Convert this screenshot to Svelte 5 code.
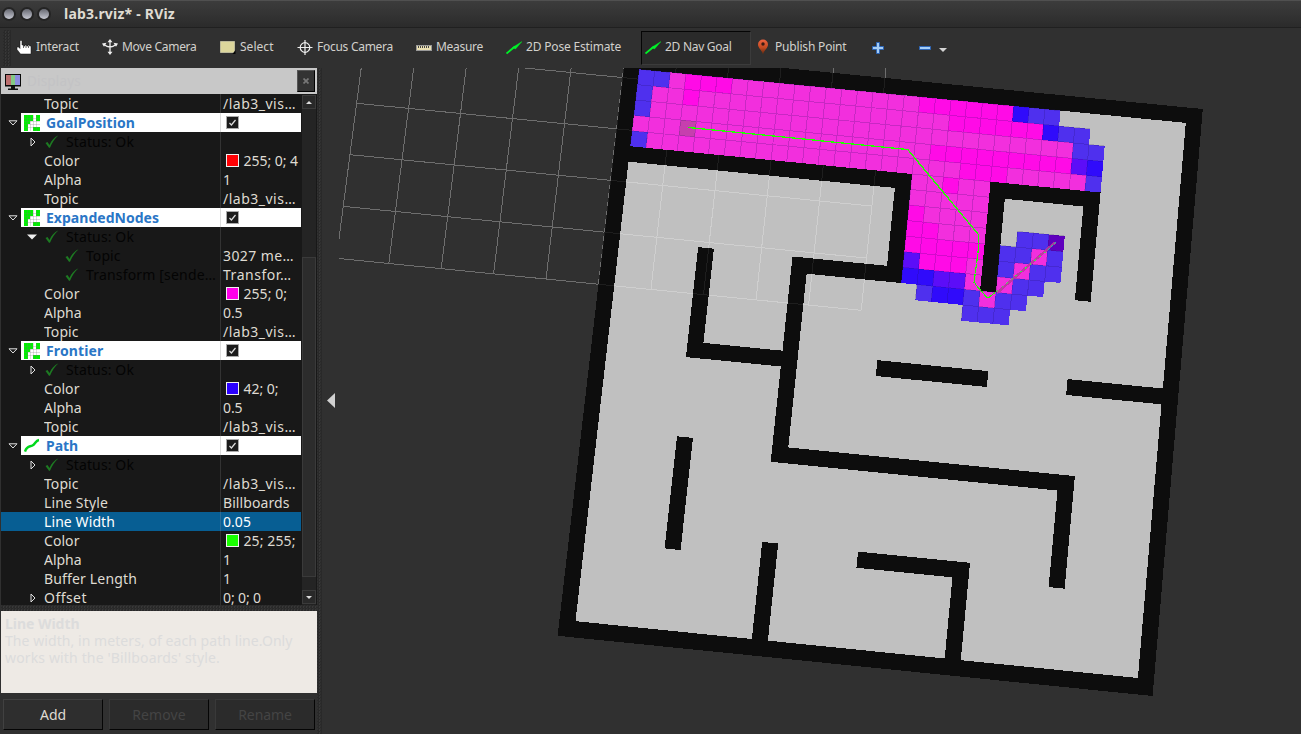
<script>
  function fit(node, target) {
    if (!target) return;
    const width = node.getBoundingClientRect().width;
    node.style.letterSpacing = `${(target - width) / node.textContent.length}px`;
  }

  const tools = [
    { icon: 'hand', label: 'Interact', w: 43, slot: 86 },
    { icon: 'move', label: 'Move Camera', w: 74.5, slot: 118 },
    { icon: 'select', label: 'Select', w: 33.5, slot: 77 },
    { icon: 'focus', label: 'Focus Camera', w: 76, slot: 119 },
    { icon: 'measure', label: 'Measure', w: 47, slot: 90 },
    { icon: 'arrow', label: '2D Pose Estimate', w: 95, slot: 135 },
    { icon: 'arrow', label: '2D Nav Goal', w: 66.5, slot: 110, active: true },
    { icon: 'pin', label: 'Publish Point', w: 71.5, slot: 115 }
  ];

  const topic = { k: 'Topic', kw: 34.5, v: '/lab3_vis…', vw: 73 };
  const status = { k: 'Status: Ok', kw: 68, kind: 'status', tri: 'right' };
  const alpha = (v) => ({ k: 'Alpha', kw: 37.5, v, vw: v === '1' ? 0 : 19.5 });
  const rows = [
    topic,
    { k: 'GoalPosition', kw: 89, kind: 'display', icon: 'map' },
    status,
    { k: 'Color', kw: 35.5, v: '255; 0; 4', vw: 54.5, swatch: '#ff0004' },
    alpha('1'),
    topic,
    { k: 'ExpandedNodes', kw: 113, kind: 'display', icon: 'map' },
    { ...status, tri: 'down' },
    { k: 'Topic', kw: 34.5, v: '3027 me…', vw: 71, kind: 'status', deep: true },
    { k: 'Transform [sende…', kw: 130, v: 'Transfor…', vw: 68.5, kind: 'status', deep: true },
    { k: 'Color', kw: 35.5, v: '255; 0;', vw: 43.5, swatch: '#ff00ea' },
    alpha('0.5'),
    topic,
    { k: 'Frontier', kw: 57.5, kind: 'display', icon: 'map' },
    status,
    { k: 'Color', kw: 35.5, v: '42; 0;', vw: 35, swatch: '#2a00ff' },
    alpha('0.5'),
    topic,
    { k: 'Path', kw: 32, kind: 'display', icon: 'path' },
    status,
    topic,
    { k: 'Line Style', kw: 64, v: 'Billboards', vw: 66.5 },
    { k: 'Line Width', kw: 71, v: '0.05', vw: 28, selected: true },
    { k: 'Color', kw: 35.5, v: '25; 255;', vw: 52, swatch: '#19ff00' },
    alpha('1'),
    { k: 'Buffer Length', kw: 93, v: '1' },
    { k: 'Offset', kw: 43, v: '0; 0; 0', vw: 38, tri: 'right' }
  ];

  // Perspective projection of the occupancy grid: 37 x 37 cells, walls start at -1.
  const corners = [[625.4, 52.5], [1202.8, 109], [1152.6, 696], [557.6, 635.8]];
  const [[x0, y0], [x1, y1], [x2, y2], [x3, y3]] = corners;
  const dx1 = x1 - x2, dx2 = x3 - x2, sx = x0 - x1 + x2 - x3;
  const dy1 = y1 - y2, dy2 = y3 - y2, sy = y0 - y1 + y2 - y3;
  const det = dx1 * dy2 - dx2 * dy1;
  const g = (sx * dy2 - dx2 * sy) / det;
  const h = (dx1 * sy - sx * dy1) / det;
  function project(c, r) {
    const u = (c + 1) / 37, v = (r + 1) / 37;
    const w = g * u + h * v + 1;
    return [
      ((x1 - x0 + g * x1) * u + (x3 - x0 + h * x3) * v + x0) / w,
      ((y1 - y0 + g * y1) * u + (y3 - y0 + h * y3) * v + y0) / w
    ];
  }
  const pt = (c, r) => project(c, r).map((n) => n.toFixed(2)).join(',');
  const quad = (c, r, w, n) => `M${pt(c, r)}L${pt(c + w, r)}L${pt(c + w, r + n)}L${pt(c, r + n)}Z`;

  const walls = [
    [-1, 5, 19, 1], [17, 5, 1, 7], [11, 11, 7, 1], [11, 11, 1, 13], [11, 23, 19, 1], [29, 23, 1, 7],
    [5, 11, 1, 7], [5, 17, 7, 1], [17, 17, 7, 1], [29, 17, 7, 1],
    [23, 5, 7, 1], [29, 5, 1, 7], [23, 5, 1, 7],
    [5, 23, 1, 7], [11, 29, 1, 7], [17, 29, 7, 1], [23, 29, 1, 7]
  ].map((a) => quad(...a)).join('');

  const lines = [];
  const step = 10 / 3, gridBottom = 13.97;
  for (let i = 0; i <= 10; i++) {
    const c = -1 + step * (i - 5), r = gridBottom - step * i;
    lines.push(`M${pt(c, gridBottom)}L${pt(c, gridBottom - step * 10)}`);
    lines.push(`M${pt(-1 - step * 5, r)}L${pt(-1 + step * 5, r)}`);
  }
  const grid = lines.join('');

  // row, first column, then one letter per cell
  const palette = { b: '#4f30ee', d: '#300bfb', v: '#5c0df8', m: '#ff0be6', p: '#f22fdd', g: '#c63fae', x: '#5f00bd' };
  const runs = [
    [0, 0, 'bbpmmm' + 'p'.repeat(12) + 'mmmmmmdbb'],
    [1, 0, 'bppm' + 'p'.repeat(16) + 'mmmmmmdbb'],
    [2, 0, 'b' + 'p'.repeat(27) + 'bb'],
    [3, 0, 'pppg' + 'p'.repeat(15) + 'mmmmmmmmmvd'],
    [4, 0, 'b' + 'p'.repeat(20) + 'mmmpppppb'],
    [5, 18, 'ppmpp'], [6, 18, 'ppppp'], [7, 18, 'mpppp'], [8, 18, 'mmppp'], [9, 18, 'mmmmm'],
    [10, 18, 'vmmmp'], [11, 18, 'ddvvp'], [12, 19, 'bddbpbb'], [13, 22, 'bbb'],
    [8, 25, 'bbx'], [9, 24, 'bbpb'], [10, 24, 'bpbb'], [11, 24, 'pbb']
  ];
  const cells = runs.flatMap(([r, c, s]) =>
    [...s].map((ch, i) => ({ d: quad(c + i, r, 1, 1), fill: palette[ch] }))
  );
  const cellLines = runs.map(([r, c, s]) =>
    [...s].map((_, i) => `M${pt(c + i, r + 1)}L${pt(c + i, r)}L${pt(c + i + 1, r)}`).join('')
  ).join('');
</script>

{#snippet toolIcon(name)}
  <svg class="ticon" viewBox="0 0 16 16" width="16" height="16">
    {#if name === 'hand'}
      <path d="M4 1.500h2V6h1.500v1H9V6h1.500v1H12V6h1.500v1H15v8H4.500L1 10.500V8h1.500L4 9.500Z" fill="#fff" stroke="#111" stroke-width=".5" />
      <path d="M7.500 7v2M10 7v2M12.500 7v2" stroke="#444" stroke-width=".8" />
    {:else if name === 'move'}
      <path d="M8 2v12M2 5.500Q8 10.500 14 5.500" fill="none" stroke="#eee" stroke-width="1.300" />
      <path d="M8 0l2.500 3.200h-5zM8 16l2.500-3.200h-5zM0 4.500l4.500-.7-2.500 4zM16 4.500l-4.500-.7 2.500 4z" fill="#eee" />
    {:else if name === 'select'}
      <rect x=".5" y="2.500" width="14" height="11" fill="#dcd69c" stroke="#f3efcf" stroke-dasharray="1 1" />
      <path d="M15.500 11v4h-3z" fill="#050505" />
    {:else if name === 'focus'}
      <circle cx="8" cy="8.500" r="4.800" fill="none" stroke="#eee" stroke-width="1.200" />
      <path d="M8 1v15M.5 8.500h15" stroke="#eee" stroke-width="1.200" />
    {:else if name === 'measure'}
      <rect x=".5" y="6.500" width="15" height="5" fill="#e9deb0" stroke="#999" />
      <path d="M2.500 7v2M4.500 7v2M6.500 7v2M8.500 7v2M10.500 7v2M12.500 7v2" stroke="#444" stroke-width="1" />
    {:else if name === 'arrow'}
      <path d="M.5 14.500L9 7.500" stroke="#00f228" stroke-width="1.800" />
      <path d="M6.500 8.500L16 2.500l-6.500 7.500z" fill="#00f228" stroke="#00f228" stroke-width=".4" />
    {:else if name === 'pin'}
      <defs><linearGradient id="pin" x2="0" y2="1"><stop offset="0" stop-color="#ef6340" /><stop offset=".55" stop-color="#c24a20" /><stop offset="1" stop-color="#572711" /></linearGradient></defs>
      <path d="M8 .5a5 5 0 0 1 5 5c0 3.500-3.500 5-5 10-1.500-5-5-6.500-5-10a5 5 0 0 1 5-5z" fill="url(#pin)" />
      <circle cx="8" cy="5" r="1.700" fill="#3a1a12" />
    {:else if name === 'plus'}
      <path d="M6.500 3.500h3v4h4v3h-4v4h-3v-4h-4v-3h4z" fill="#a5cdf5" stroke="#2d65b5" />
    {:else if name === 'minus'}
      <path d="M2.500 7.500h11v3h-11z" fill="#a5cdf5" stroke="#2d65b5" />
    {/if}
  </svg>
{/snippet}

<div class="window">
  <header class="titlebar">
    <i class="dot"></i><i class="dot"></i><i class="dot"></i>
    <span class="title" use:fit={111}>lab3.rviz* - RViz</span>
  </header>

  <nav class="toolbar">
    <i class="grip"></i>
    {#each tools as tool}
      <div class="tool" class:active={tool.active} style:width="{tool.slot}px">
        {@render toolIcon(tool.icon)}<span use:fit={tool.w}>{tool.label}</span>
      </div>
    {/each}
    <div class="tool plus">{@render toolIcon('plus')}</div>
    <div class="tool">{@render toolIcon('minus')}<i class="caret"></i></div>
  </nav>

  <main class="body">
    <aside class="panel">
      <div class="dock">
        <svg width="16" height="17" viewBox="0 0 16 17">
          <rect width="16" height="12.500" fill="#080808" />
          <path d="M1 1h5v10H1z" fill="#bb6e6e" /><path d="M6 1h4v10H6z" fill="#84c984" /><path d="M10 1h5v10h-5z" fill="#8c8ce0" />
          <path d="M6 12h4v2.500h3V16H3v-1.500h3z" fill="#111" />
        </svg>
        <span use:fit={54}>Displays</span>
        <button aria-label="Close"><svg width="6" height="6" viewBox="0 0 6 6"><path d="M.5.5l5 5M5.500.5l-5 5" stroke="#777" stroke-width="1.700" /></svg></button>
      </div>

      <div class="treewrap">
        <div class="tree">
          {#each rows as row}
            <div class="row {row.kind ?? ''}" class:deep={row.deep} class:selected={row.selected}>
              <div class="arrow">
                {#if row.kind === 'display'}
                  <svg width="10" height="6" viewBox="0 0 10 6"><path d="M1 .8h8L5 5z" fill="none" stroke="#e0e0e0" /></svg>
                {:else if row.tri === 'down'}
                  <svg class="open" width="10" height="6" viewBox="0 0 10 6"><path d="M0 .5h10L5 5.500z" fill="#eee" /></svg>
                {:else if row.tri === 'right'}
                  <svg width="6" height="10" viewBox="0 0 6 10"><path d="M1 1v8l4-4z" fill="none" stroke="#e0e0e0" /></svg>
                {/if}
              </div>
              <div class="key">
                {#if row.icon === 'map'}
                  <svg width="16" height="16" viewBox="0 0 16 16">
                    <path d="M0 0h16v16H0z" fill="#fff" />
                    <path d="M0 0h9v6H6v3H4v7H0zM12 0h4v6h-4zM9 12h7v4H9z" fill="#00f000" />
                    <path d="M3.500 0v16M6.500 0v16M9.500 0v16M12.500 0v16M0 3.500h16M0 6.500h16M0 9.500h16M0 12.500h16" stroke="#777" stroke-opacity=".25" />
                  </svg>
                {:else if row.icon === 'path'}
                  <svg width="16" height="16" viewBox="0 0 16 16"><path d="M1 13.500C3 7.500 5.500 9 8.500 7.500s3-5 6.500-5.500" fill="none" stroke="#00d81c" stroke-width="2.400" /></svg>
                {:else if row.kind === 'status'}
                  <svg width="14" height="13" viewBox="0 0 14 13"><path d="M.5 8l2-1 2 3C6.500 5.500 9 2.500 13.500.3 9.500 4 7 8 5 12.700H4z" fill="#1d7a22" /></svg>
                {/if}
                <span use:fit={row.kw}>{row.k}</span>
              </div>
              <div class="value">
                {#if row.kind === 'display'}
                  <i class="check"><svg width="11" height="11" viewBox="0 0 11 11"><path d="M2.500 6l1.900 2L8.500 3" fill="none" stroke="#ddd" stroke-width="1.200" /></svg></i>
                {/if}
                {#if row.swatch}<i class="swatch" style:background={row.swatch}></i>{/if}
                {#if row.v}<span use:fit={row.vw}>{row.v}</span>{/if}
              </div>
            </div>
          {/each}
        </div>
        <div class="scroll">
          <div class="sbtn"><svg width="6" height="3"><path d="M0 3l3-3 3 3z" fill="#ddd" /></svg></div>
          <div class="trough"></div>
          <div class="thumb"></div>
          <div class="gap"></div>
          <div class="sbtn"><svg width="6" height="3"><path d="M0 0l3 3 3-3z" fill="#ddd" /></svg></div>
        </div>
      </div>

      <div class="splitter"></div>
      <div class="help">
        <b use:fit={74.5}>Line Width</b>
        <span use:fit={287.5}>The width, in meters, of each path line.Only</span>
        <span use:fit={215}>works with the 'Billboards' style.</span>
      </div>
      <div class="buttons">
        <button><span use:fit={26}>Add</span></button>
        <button class="off"><span use:fit={53.5}>Remove</span></button>
        <button class="off"><span use:fit={53.5}>Rename</span></button>
      </div>
    </aside>

    <div class="vsplit"></div>
    <div class="collapse"><svg width="8" height="15" viewBox="0 0 8 15"><path d="M8 0v15L0 7.500z" fill="#d0d0d0" /></svg></div>

    <svg class="view" width="962" height="666" viewBox="339 68 962 666" shape-rendering="crispEdges">
      <defs><clipPath id="floor"><path d={quad(0, 6, 17, 29)} /></clipPath></defs>
      <path d={grid} fill="none" stroke="#646464" />
      <path d={quad(-1, -1, 37, 37)} fill="#0d0d0d" />
      <path d={quad(0, 0, 35, 35)} fill="#c0c0c0" />
      <path d={grid} fill="none" stroke="#fff" stroke-opacity=".2" clip-path="url(#floor)" />
      <path d={walls} fill="#0d0d0d" />
      <path d={grid} fill="none" stroke="#fff" stroke-opacity=".07" />
      {#each cells as cell}<path d={cell.d} fill={cell.fill} />{/each}
      <path d={cellLines} fill="none" stroke="#201060" stroke-opacity=".2" />
      <path d="M1055 242.500L997 293" stroke="#b83b9c" stroke-width="2.500" opacity=".85" />
      <path d="M688.300 127.500L907.700 149.500L978.300 234.300" fill="none" stroke="#22ff00" stroke-width="1.300" />
      <path d="M978.300 234.300V250L974 282.700L987.700 298.300L997 291" fill="none" stroke="#22ff00" stroke-width="1.200" stroke-dasharray="9 1" />
      <path d="M997 291L1048 250" stroke="#46dc55" stroke-dasharray="2 4" />
      <path d="M1048 250L1056 242" stroke="#1fd0a0" stroke-dasharray="3 1" />
    </svg>
  </main>
</div>

<style>
  :global(body) { background: #303030; overflow: hidden; }
  .window { width: 1301px; height: 734px; display: flex; flex-direction: column; background: #303030; font: 14px/19px "Noto Sans", sans-serif; color: #dfdbd2; white-space: pre; }
  svg { display: block; flex: none; }
  .titlebar { height: 28px; box-sizing: border-box; display: flex; align-items: center; padding: 0 0 1px 4px; gap: 7.500px; border-top: 1px solid #505050; border-bottom: 1px solid #202020; background: linear-gradient(#3c3c3c, #2b2b2b); }
  .dot { width: 10px; height: 10px; border-radius: 50%; background: linear-gradient(#666871, #c6c8d2); box-shadow: 0 0 0 2px #242424; }
  .title { font-weight: 700; margin-left: 7.500px; }
  .toolbar { height: 40px; display: flex; align-items: center; font-size: 12px; color: #d2d0cc; }
  .grip { width: 8px; height: 36px; margin: 0 5px 0 3px; background: conic-gradient(#292929 25%, #383838 0 50%, #292929 0 75%, #303030 0) 0 0 / 3px 3px; }
  .tool { box-sizing: border-box; display: flex; align-items: center; gap: 4px; height: 34px; padding-bottom: 2px; flex: none; }
  .tool span { line-height: 18px; }
  .active { padding: 0 0 2px 3px; margin-right: 4px; background: #2a2a2a; border: 1px solid; border-color: #050505 #3b3b3b #3b3b3b #050505; }
  .plus { width: 47px; }
  .caret { margin: 6px 0 0 2px; border: 4px solid transparent; border-top-color: #d4d4d4; border-bottom: 0; }
  .body { display: flex; height: 666px; }
  .panel { width: 316px; padding-left: 1px; display: flex; flex-direction: column; }
  .panel > div { flex: none; }
  .dock { height: 26px; box-sizing: border-box; display: flex; align-items: center; padding: 0 2px 0 4px; gap: 6px; background: #c8c8c8; font-size: 13.500px; }
  .dock > svg { margin-top: 2px; }
  .dock span { color: #c3c3c5; }
  .dock button { margin-left: auto; width: 18px; height: 22px; padding: 0; display: grid; place-items: center; background: #333; border: 1px solid; border-color: #555 #000 #000 #555; }
  .treewrap { height: 511px; display: flex; background: #181818; overflow: hidden; }
  .tree { width: 300px; }
  .row { height: 19px; display: grid; grid-template-columns: 43px 176px 81px; }
  .arrow { display: flex; align-items: center; padding-left: 29px; }
  .open { margin-left: -3px; }
  .key { display: flex; align-items: center; overflow: hidden; }
  .value { display: flex; align-items: center; border-left: 1px solid #333; padding-left: 2px; box-sizing: border-box; overflow: hidden; }
  .display { grid-template-columns: 20px 199px 81px; }
  .display .arrow { padding-left: 7px; }
  .display .key, .display .value { background: #fff; }
  .display .value { border-color: #ddd; padding-left: 5px; }
  .display .key { gap: 6px; padding-left: 3px; color: #2a76c6; font-weight: 700; box-sizing: border-box; }
  .status .key { gap: 7px; padding-left: 1px; color: #040404; box-sizing: border-box; }
  .deep { grid-template-columns: 63px 156px 81px; }
  .deep .arrow { visibility: hidden; }
  .selected { background: #075e93; color: #fff; }
  .selected .value { border-color: #2b6d97; }
  .check { width: 11px; height: 11px; border: 1px solid #aaa; background: #1b1b1b; }
  .swatch { width: 11px; height: 11px; border: 1px solid #f0f0f0; margin: 0 4.500px 0 3px; flex: none; }
  .scroll { width: 14px; margin: 1px 1px 0 1px; display: flex; flex-direction: column; height: 510px; background: #222; }
  .sbtn { height: 14px; box-sizing: border-box; border: 1px solid #3b3b3b; background: #292929; display: grid; place-items: center; flex: none; }
  .trough { height: 148px; background: #242424; }
  .thumb { height: 320px; box-sizing: border-box; background: #2c2c2c; border: 1px solid #3a3a3a; }
  .gap { height: 13px; background: #242424; }
  .splitter { height: 6px; background: conic-gradient(#292929 25%, #383838 0 50%, #292929 0 75%, #303030 0) 0 0 / 3px 3px; }
  .help { height: 82px; box-sizing: border-box; background: #eeeae5; color: #dcdcdc; padding: 4px 4px; display: flex; flex-direction: column; align-items: flex-start; line-height: 17px; }
  .buttons { display: flex; gap: 6px; padding: 6px 2px 4px; }
  .buttons button { width: 100px; height: 31px; padding: 0; background: #2e2e2e; border: 1px solid; border-color: #414141 #050505 #050505 #414141; color: #dfdbd2; font: inherit; }
  .buttons .off { background: #2b2b2b; border-color: #393939 #050505 #050505 #393939; color: #444; }
  .vsplit { width: 5px; background: conic-gradient(#292929 25%, #383838 0 50%, #292929 0 75%, #303030 0) 0 0 / 3px 3px; }
  .collapse { width: 12px; padding: 325px 0 0 5px; }
</style>
